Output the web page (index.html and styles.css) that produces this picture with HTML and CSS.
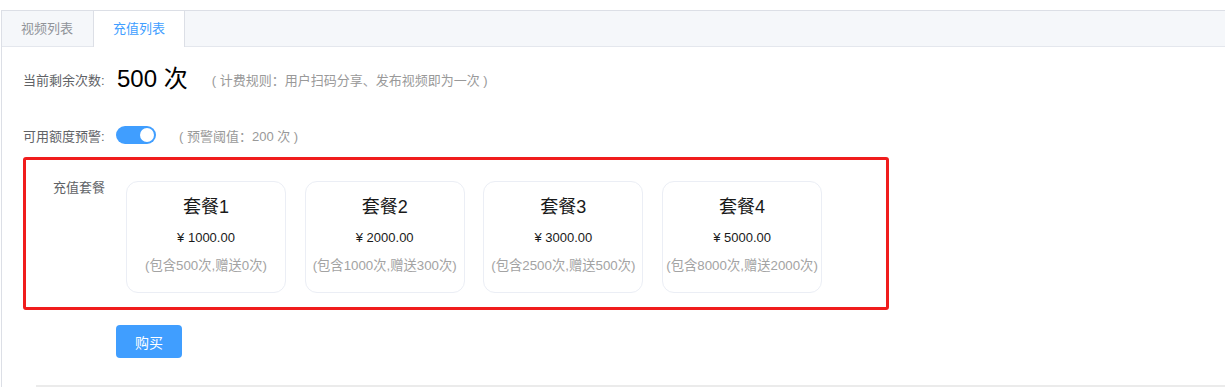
FILE: index.html
```html
<!DOCTYPE html>
<html lang="zh-CN">
<head>
<meta charset="utf-8">
<title>充值列表</title>
<link rel="stylesheet" href="styles.css">
</head>
<body>
<div class="tabs">
  <div class="tabs-header">
    <div class="tab">视频列表</div>
    <div class="tab active">充值列表</div>
  </div>
  <div class="tabs-content">
    <div class="row row-first">
      <span class="label">当前剩余次数:</span>
      <span class="count">500 次</span>
      <span class="hint hint-rule">( 计费规则：用户扫码分享、发布视频即为一次 )</span>
    </div>
    <div class="row row-second">
      <span class="label">可用额度预警:</span>
      <span class="switch"><span class="knob"></span></span>
      <span class="hint hint-warn">( 预警阈值：200 次 )</span>
    </div>
    <div class="package-box">
      <div class="package-label">充值套餐</div>
      <div class="packages">
        <div class="card">
          <div class="card-title">套餐1</div>
          <div class="card-price">¥ 1000.00</div>
          <div class="card-desc">(包含500次,赠送0次)</div>
        </div>
        <div class="card">
          <div class="card-title">套餐2</div>
          <div class="card-price">¥ 2000.00</div>
          <div class="card-desc">(包含1000次,赠送300次)</div>
        </div>
        <div class="card">
          <div class="card-title">套餐3</div>
          <div class="card-price">¥ 3000.00</div>
          <div class="card-desc">(包含2500次,赠送500次)</div>
        </div>
        <div class="card">
          <div class="card-title">套餐4</div>
          <div class="card-price">¥ 5000.00</div>
          <div class="card-desc">(包含8000次,赠送2000次)</div>
        </div>
      </div>
    </div>
    <button class="buy" type="button">购买</button>
    <div class="divider"></div>
  </div>
</div>
</body>
</html>
```

FILE: styles.css
```css
* { box-sizing: border-box; }

html, body {
  margin: 0;
  padding: 0;
  background: #ffffff;
  font-family: "Liberation Sans", "Noto Sans CJK SC", sans-serif;
  color: #303133;
  overflow: hidden;
}

body {
  padding-top: 10px;
  padding-left: 1px;
}

.tabs {
  border-top: 1px solid #dcdfe6;
  border-left: 1px solid #dcdfe6;
}

.tabs-header {
  display: flex;
  height: 36px;
  background: #f5f7fa;
  border-bottom: 1px solid #e4e7ed;
}

.tab {
  height: 35px;
  line-height: 35px;
  padding: 0 19px;
  font-size: 13px;
  color: #909399;
  border-right: 1px solid transparent;
}

.tab.active {
  background: #ffffff;
  color: #409eff;
  border-left: 1px solid #dcdfe6;
  border-right: 1px solid #dcdfe6;
  height: 36px;
  padding: 0 19px 0 19px;
  margin-bottom: -1px;
}

.tabs-content {
  padding: 12px 0 0 21px;
}

.row {
  display: flex;
  align-items: center;
  height: 40px;
}

.row-second {
  margin-top: 16px;
}

.label {
  width: 94px;
  font-size: 13px;
  color: #606266;
  flex: none;
}

.count {
  font-size: 24px;
  line-height: 30px;
  color: #000000;
}

.hint {
  font-size: 13px;
  color: #999999;
}

.hint-rule {
  margin-left: 24px;
}

.hint-warn {
  margin-left: 23px;
}

.switch {
  position: relative;
  display: inline-block;
  width: 40px;
  height: 18px;
  border-radius: 9px;
  background: #409eff;
  margin-left: -1px;
}

.knob {
  position: absolute;
  top: 2px;
  right: 2px;
  width: 14px;
  height: 14px;
  border-radius: 50%;
  background: #ffffff;
}

.package-box {
  display: flex;
  align-items: flex-start;
  width: 866px;
  margin-top: 2px;
  padding: 21px 0 14px 0;
  border: 3px solid #f01d1d;
  border-radius: 3px;
}

.package-label {
  width: 80px;
  padding-right: 1px;
  text-align: right;
  font-size: 13px;
  line-height: 14px;
  color: #606266;
  flex: none;
}

.packages {
  display: flex;
  gap: 18.7px;
  margin-left: 20px;
}

.card {
  width: 160px;
  height: 112px;
  border: 1px solid #ebeef5;
  border-radius: 12px;
  text-align: center;
  padding-top: 13px;
}

.card-title {
  font-size: 18px;
  line-height: 24px;
  color: #1a1a1a;
}

.card-price {
  margin-top: 10px;
  font-size: 13px;
  line-height: 18px;
  color: #1a1a1a;
}

.card-desc {
  margin-top: 9px;
  font-size: 13.3px;
  line-height: 20px;
  color: #a3a3a3;
  white-space: nowrap;
}

.buy {
  display: block;
  margin: 15px 0 0 93px;
  width: 66px;
  height: 33px;
  border: none;
  border-radius: 4px;
  background: #409eff;
  color: #ffffff;
  font-family: inherit;
  font-size: 14px;
  padding: 0;
}

.divider {
  margin: 27px 0 0 13px;
  height: 2px;
  background: #ebebeb;
}
```
